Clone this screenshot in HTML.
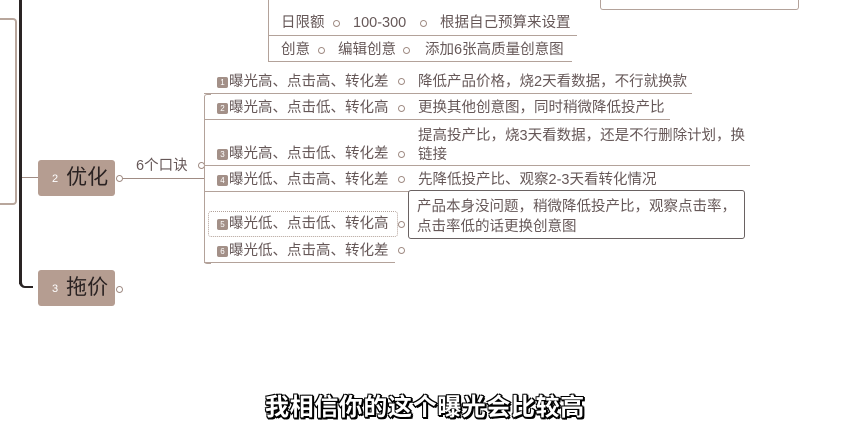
<!DOCTYPE html>
<html><head><meta charset="utf-8"><style>
body{margin:0;width:854px;height:440px;background:#fff;position:relative;overflow:hidden;font-family:"Liberation Sans","Noto Sans CJK SC",sans-serif;color:#665858}
.a{position:absolute;white-space:nowrap}
.t{font-size:14.5px;line-height:16px}
.ul{position:absolute;height:0;border-top:1px solid #b3a29a}
.dot{position:absolute;width:5px;height:5px;border:1px solid #a08c84;border-radius:50%;background:#fff}
.num{display:inline-block;width:11px;height:11px;background:#a39088;color:#fff;font-size:8px;line-height:11px;text-align:center;border-radius:2px;vertical-align:1px;margin-right:1px}
.node{position:absolute;left:38px;width:77px;height:36px;background:#b59d91;border-radius:3px;color:#2a2222;font-size:21px;line-height:36px}
.node .n{color:#fff;font-size:11px;margin:0 8px 0 14px;vertical-align:2px}
</style></head><body>
<div class="a" style="left:19px;top:0;width:3px;height:284px;background:#2a2424"></div>
<div class="a" style="left:19px;top:276px;width:14px;height:12px;border-left:3px solid #2a2424;border-bottom:2px solid #2a2424;border-bottom-left-radius:6px;box-sizing:border-box"></div>
<div class="a" style="left:22px;top:177px;width:16px;border-top:1px solid #a08c84"></div>
<div class="a" style="left:-5px;top:18px;width:20px;height:183px;border:2px solid #b8a69c;border-left:none;border-radius:0 4px 4px 0"></div>
<div class="a" style="left:268px;top:0;width:0;height:61px;border-left:1px solid #b3a29a"></div>
<div class="a t" style="left:281px;top:15px">日限额</div>
<div class="dot" style="left:333px;top:20px"></div>
<div class="a t" style="left:353px;top:15px">100-300</div>
<div class="dot" style="left:420px;top:20px"></div>
<div class="a t" style="left:440px;top:15px">根据自己预算来设置</div>
<div class="ul" style="left:268px;top:35px;width:309px"></div>
<div class="a t" style="left:281px;top:42px">创意</div>
<div class="dot" style="left:318px;top:47px"></div>
<div class="a t" style="left:338px;top:42px">编辑创意</div>
<div class="dot" style="left:403px;top:47px"></div>
<div class="a t" style="left:425px;top:42px">添加6张高质量创意图</div>
<div class="ul" style="left:268px;top:61px;width:304px"></div>
<div class="a" style="left:600px;top:-6px;width:197px;height:15px;border:1px solid #b3a29a;border-top:none;border-radius:0 0 3px 3px"></div>
<div class="node" style="top:160px"><span class="n">2</span>优化</div>
<div class="dot" style="left:116px;top:175px"></div>
<div class="a" style="left:123px;top:178px;width:81px;border-top:1px solid #a08c84"></div>
<div class="a t" style="left:136px;top:158px">6个口诀</div>
<div class="dot" style="left:198px;top:162px"></div>
<div class="node" style="top:270px"><span class="n">3</span>拖价</div>
<div class="dot" style="left:116px;top:286px"></div>
<div class="a" style="left:204px;top:94px;width:6px;height:168px;border:1px solid #b3a29a;border-right:none;border-radius:3px 0 0 3px"></div>

<div class="a t" style="left:217px;top:74px"><span class="num">1</span>曝光高、点击高、转化差</div>
<div class="dot" style="left:398px;top:78px"></div>
<div class="a t" style="left:418px;top:74px">降低产品价格，烧2天看数据，不行就换款</div>
<div class="ul" style="left:204px;top:93px;width:488px"></div>

<div class="a t" style="left:217px;top:100px"><span class="num">2</span>曝光高、点击低、转化高</div>
<div class="dot" style="left:398px;top:105px"></div>
<div class="a t" style="left:418px;top:100px">更换其他创意图，同时稍微降低投产比</div>
<div class="ul" style="left:204px;top:119px;width:466px"></div>

<div class="a t" style="left:217px;top:146px"><span class="num">3</span>曝光高、点击低、转化差</div>
<div class="dot" style="left:398px;top:151px"></div>
<div class="a t" style="left:418px;top:127px;line-height:19px">提高投产比，烧3天看数据，还是不行删除计划，换<br>链接</div>
<div class="ul" style="left:204px;top:165px;width:546px"></div>

<div class="a t" style="left:217px;top:172px"><span class="num">4</span>曝光低、点击高、转化差</div>
<div class="dot" style="left:398px;top:176px"></div>
<div class="a t" style="left:418px;top:172px">先降低投产比、观察2-3天看转化情况</div>
<div class="ul" style="left:204px;top:191px;width:205px"></div>

<div class="a" style="left:208px;top:211px;width:188px;height:24px;border:1px dotted #b3a29a;border-radius:3px"></div>
<div class="a t" style="left:217px;top:216px"><span class="num">5</span>曝光低、点击低、转化高</div>
<div class="dot" style="left:398px;top:221px"></div>
<div class="a" style="left:408px;top:190px;width:335px;height:47px;border:1px solid #6a6262;border-radius:3px"></div>
<div class="a t" style="left:417px;top:197px;line-height:20px">产品本身没问题，稍微降低投产比，观察点击率，<br>点击率低的话更换创意图</div>

<div class="a t" style="left:217px;top:243px"><span class="num">6</span>曝光低、点击高、转化差</div>
<div class="dot" style="left:398px;top:247px"></div>
<div class="ul" style="left:204px;top:262px;width:191px"></div>
<div class="a" style="left:265px;top:394px;font-size:24px;line-height:28px;font-weight:bold;color:#fff;letter-spacing:0.6px;text-shadow:-1px -1px 0 #000,1px -1px 0 #000,-1px 1px 0 #000,1px 1px 0 #000,2px 2px 0 #000,0 2px 0 #000,2px 0 0 #000">我相信你的这个曝光会比较高</div>
</body></html>
